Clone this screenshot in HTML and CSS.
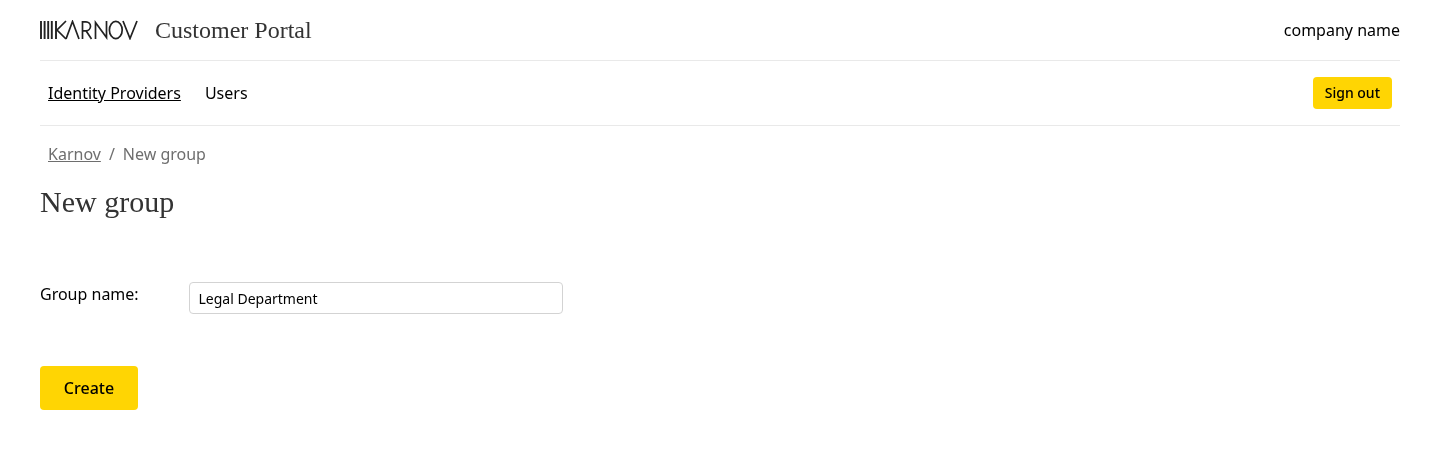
FILE: index.html
```html
<!DOCTYPE html>
<html lang="en">
<head>
<meta charset="utf-8">
<title>Customer Portal</title>
<link rel="stylesheet" href="styles.css">
</head>
<body>
<div class="page">
  <header class="top">
    <div class="brand">
      <svg class="logo" width="98" height="20" viewBox="0 0 98 20" fill="none" stroke="#222" stroke-width="1.7" aria-label="Karnov">
        <path stroke-width="1.9" d="M1 1v18M4.6 1v18M8.2 1v18M11.8 1v18"/>
        <path stroke-width="1.9" d="M16 1v18"/>
        <path d="M26 1 17 10l9 9"/>
        <path d="M26 19 32.5 1.5 39 19"/>
        <path d="M42.5 19V1.8h3.5a4.5 4.5 0 0 1 0 9H42.5M46 10.8 51.5 19"/>
        <path d="M55.5 19V2.5l11 15V1"/>
        <ellipse cx="75.8" cy="10" rx="6.4" ry="8.6"/>
        <path d="M83 1l7 17.5L97 1"/>
      </svg>
      <span class="portal">Customer Portal</span>
    </div>
    <span class="company">company name</span>
  </header>
  <nav class="nav">
    <div class="links">
      <a class="link active" href="#">Identity Providers</a>
      <a class="link" href="#">Users</a>
    </div>
    <button class="btn small" type="button">Sign out</button>
  </nav>
  <div class="crumbs">
    <a href="#">Karnov</a><span class="sep">/</span><span>New group</span>
  </div>
  <h1>New group</h1>
  <form class="form">
    <div class="row">
      <label for="gn">Group name:</label>
      <input id="gn" type="text" value="Legal Department">
    </div>
    <button class="btn large" type="button">Create</button>
  </form>
</div>
</body>
</html>
```
FILE: styles.css
```css
* { box-sizing: border-box; }
html, body { margin: 0; background: #fff; }
body { font-family: "Noto Sans", sans-serif; font-size: 16px; color: #000; }
.page { padding: 0 40px; will-change: transform; }
.top { height: 61px; display: flex; align-items: center; justify-content: space-between; border-bottom: 1px solid #e9e9e9; }
.brand { display: flex; align-items: center; gap: 17px; }
.logo { display: block; }
.portal { font-family: "Liberation Serif", serif; font-size: 24px; color: #333; }
.nav { height: 65px; display: flex; align-items: center; justify-content: space-between; padding: 0 8px; border-bottom: 1px solid #e9e9e9; }
.links { display: flex; gap: 24px; }
.link { color: #000; text-decoration: none; }
.link.active { text-decoration: underline; }
.btn { border: 0; background: #ffd503; color: #000; font-family: inherit; border-radius: 4px; }
.btn.small { font-size: 14px; font-weight: 500; height: 32px; padding: 0 12px 2px; }
.btn.large { font-size: 16px; font-weight: 500; width: 98px; height: 44px; display: block; }
.crumbs { padding: 17px 8px 0; line-height: 22px; color: #6e6e6e; }
.crumbs a { color: #6e6e6e; }
.sep { margin: 0 8px; }
h1 { font-family: "Liberation Serif", serif; font-weight: 400; font-size: 30px; line-height: 36px; color: #333; margin: 19px 0 0; }
.form { margin-top: 62px; }
.row { display: flex; align-items: flex-start; margin-bottom: 52px; }
.row label { width: 149px; line-height: 24px; }
.row input { width: 374px; height: 32px; border: 1px solid #d3d3d3; border-radius: 4px; padding: 0 8.5px; font-family: inherit; font-size: 14px; color: #000; }
```
